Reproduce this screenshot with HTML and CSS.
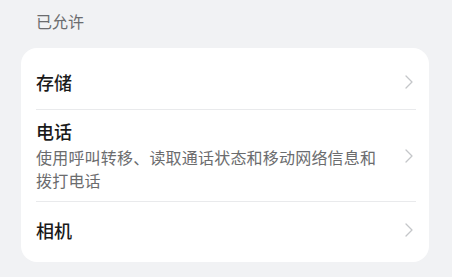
FILE: index.html
```html
<!DOCTYPE html>
<html lang="zh-CN">
<head>
<meta charset="utf-8">
<link rel="stylesheet" href="styles.css">
</head>
<body>
<div class="page">
  <div class="section-title">已允许</div>
  <div class="card">
    <div class="row row-single">
      <div class="text">
        <div class="title">存储</div>
      </div>
      <svg class="chev" width="8" height="14" viewBox="0 0 8 14"><path d="M1 1 L7 7 L1 13" fill="none" stroke="#c4c6c9" stroke-width="1.3" stroke-linecap="round" stroke-linejoin="round"/></svg>
    </div>
    <div class="divider"></div>
    <div class="row row-multi">
      <div class="text">
        <div class="title">电话</div>
        <div class="sub">使用呼叫转移、读取通话状态和移动网络信息和拨打电话</div>
      </div>
      <svg class="chev" width="8" height="14" viewBox="0 0 8 14"><path d="M1 1 L7 7 L1 13" fill="none" stroke="#c4c6c9" stroke-width="1.3" stroke-linecap="round" stroke-linejoin="round"/></svg>
    </div>
    <div class="divider"></div>
    <div class="row row-single">
      <div class="text">
        <div class="title">相机</div>
      </div>
      <svg class="chev" width="8" height="14" viewBox="0 0 8 14"><path d="M1 1 L7 7 L1 13" fill="none" stroke="#c4c6c9" stroke-width="1.3" stroke-linecap="round" stroke-linejoin="round"/></svg>
    </div>
  </div>
</div>
</body>
</html>
```
FILE: styles.css
```css
html, body {
  margin: 0;
  padding: 0;
  background: #f1f2f4;
}
body {
  font-family: "Noto Sans CJK SC", "Noto Sans", sans-serif;
  width: 452px;
  height: 277px;
  overflow: hidden;
}
.page {
  padding: 10px 23px 0 21px;
}
.section-title {
  padding-left: 15px;
  font-size: 16px;
  line-height: 22px;
  color: #6b6c6e;
}
.card {
  margin-top: 16px;
  background: #ffffff;
  border-radius: 16px;
  padding: 6px 0 5px 0;
}
.row {
  display: flex;
  align-items: center;
  padding: 0 16px 0 15px;
  gap: 24px;
}
.row-single {
  height: 55px;
}
.row-multi {
  height: 91px;
}
.text {
  flex: 1;
  min-width: 0;
}
.title {
  font-size: 18px;
  line-height: 24px;
  font-weight: 500;
  color: #1a1a1a;
}
.sub {
  margin-top: 3px;
  font-size: 16px;
  line-height: 23px;
  letter-spacing: 0.2px;
  color: #6b6c6e;
}
.chev {
  flex: none;
  display: block;
}
.divider {
  height: 1px;
  background: #e9eaec;
  margin: 0 13px 0 15px;
}
```
